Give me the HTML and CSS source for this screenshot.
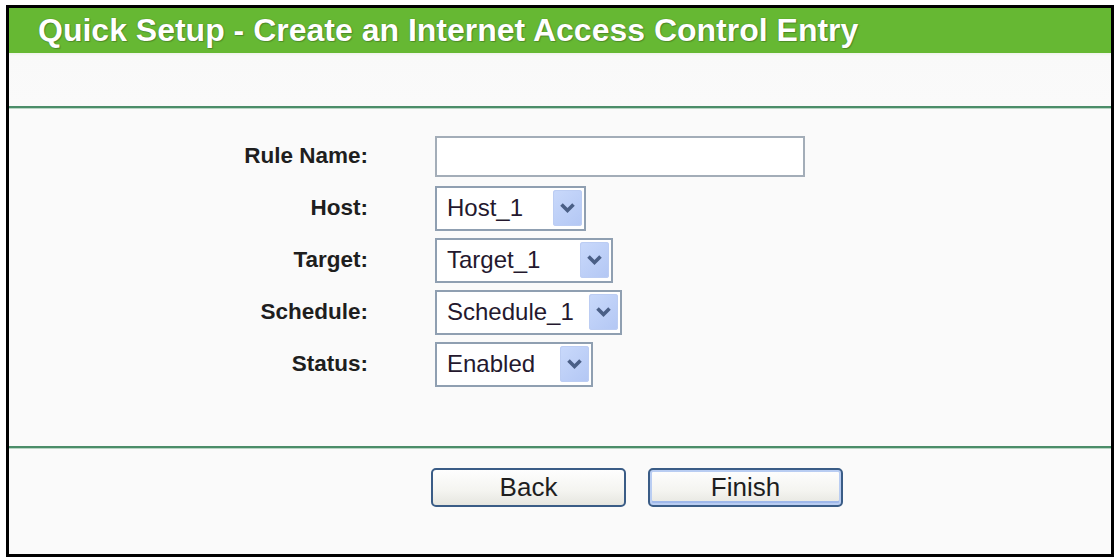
FILE: index.html
```html
<!DOCTYPE html>
<html>
<head>
<meta charset="utf-8">
<title>Quick Setup</title>
<link rel="stylesheet" href="styles.css">
</head>
<body>
<div class="frame">
  <div class="header">Quick Setup - Create an Internet Access Control Entry</div>
  <div class="band"></div>
  <div class="rule"></div>
  <div class="form">
    <div class="label">Rule Name:</div>
    <div class="cell"><div class="input"></div></div>

    <div class="label">Host:</div>
    <div class="cell">
      <div class="select w-host"><span>Host_1</span><span class="arrow"><svg width="29" height="36" viewBox="0 0 29 36"><path d="M8.5 14.5 L14.5 20.5 L20.5 14.5" fill="none" stroke="#4a5f86" stroke-width="3.6"/></svg></span></div>
    </div>

    <div class="label">Target:</div>
    <div class="cell">
      <div class="select w-target"><span>Target_1</span><span class="arrow"><svg width="29" height="36" viewBox="0 0 29 36"><path d="M8.5 14.5 L14.5 20.5 L20.5 14.5" fill="none" stroke="#4a5f86" stroke-width="3.6"/></svg></span></div>
    </div>

    <div class="label">Schedule:</div>
    <div class="cell">
      <div class="select w-schedule"><span>Schedule_1</span><span class="arrow"><svg width="29" height="36" viewBox="0 0 29 36"><path d="M8.5 14.5 L14.5 20.5 L20.5 14.5" fill="none" stroke="#4a5f86" stroke-width="3.6"/></svg></span></div>
    </div>

    <div class="label">Status:</div>
    <div class="cell">
      <div class="select w-status"><span>Enabled</span><span class="arrow"><svg width="29" height="36" viewBox="0 0 29 36"><path d="M8.5 14.5 L14.5 20.5 L20.5 14.5" fill="none" stroke="#4a5f86" stroke-width="3.6"/></svg></span></div>
    </div>
  </div>
  <div class="rule"></div>
  <div class="buttons">
    <button class="btn">Back</button>
    <button class="btn btn-default">Finish</button>
  </div>
</div>
</body>
</html>
```

FILE: styles.css
```css
html, body {
  margin: 0;
  padding: 0;
  background: #ffffff;
}
body {
  padding: 5px 0 0 6px;
  font-family: "Liberation Sans", Arial, sans-serif;
}
.frame {
  width: 1108px;
  height: 552px;
  box-sizing: border-box;
  border: 3px solid #000;
  background: #fafafa;
  display: flex;
  flex-direction: column;
}
.header {
  height: 45px;
  background: #66b833;
  color: #fff;
  font-weight: bold;
  font-size: 32px;
  line-height: 44px;
  padding-left: 29px;
  text-shadow: 0 0 1px rgba(40, 70, 20, 0.6), 1px 1px 1px rgba(40, 70, 20, 0.35);
  white-space: nowrap;
  overflow: hidden;
}
.band {
  height: 53px;
  background: linear-gradient(#eef3ea 0, #f9f9f9 3px, #fafafa 100%);
}
.rule {
  height: 2px;
  background: #4b8d69;
  border-bottom: 1px solid #b9d6c5;
}
.form {
  height: 337px;
  box-sizing: border-box;
  padding-top: 21px;
  display: grid;
  grid-template-columns: 359px 1fr;
  grid-auto-rows: 52px;
  column-gap: 67px;
  align-items: center;
}
.label {
  text-align: right;
  font-weight: bold;
  font-size: 22.5px;
  color: #1e1e1e;
}
.cell {
  display: flex;
  align-items: center;
}
.input {
  width: 370px;
  height: 41px;
  box-sizing: border-box;
  border: 2px solid #a3adb8;
  background: #fff;
}
.select {
  height: 45px;
  box-sizing: border-box;
  border: 2px solid #8f9fb1;
  background: #fff;
  display: flex;
  align-items: center;
  justify-content: space-between;
  padding: 0 2px 0 10px;
  font-size: 24px;
  color: #24182e;
}
.w-host { width: 151px; }
.w-target { width: 178px; }
.w-schedule { width: 187px; }
.w-status { width: 158px; }
.arrow {
  width: 29px;
  height: 36px;
  border-radius: 3px;
  background: linear-gradient(135deg, #c9d9fb 0%, #b3c7f4 100%);
  box-shadow: inset 0 0 0 1px #bccdf3;
  display: flex;
}
.buttons {
  flex: 1;
  display: flex;
  align-items: flex-start;
  gap: 22px;
  padding: 19px 0 0 422px;
}
.btn {
  width: 195px;
  height: 39px;
  box-sizing: border-box;
  border: 2px solid #3a5c86;
  border-radius: 5px;
  background: linear-gradient(#fefefe 0%, #f4f4f0 60%, #e6e6e0 100%);
  font-family: "Liberation Sans", Arial, sans-serif;
  font-size: 26px;
  color: #1e1e1e;
  padding: 0;
  line-height: 33px;
}
.btn-default {
  box-shadow: inset 0 0 0 2px #b9cdf2, inset 0 -2px 0 2px #9fb8ea;
}
```
